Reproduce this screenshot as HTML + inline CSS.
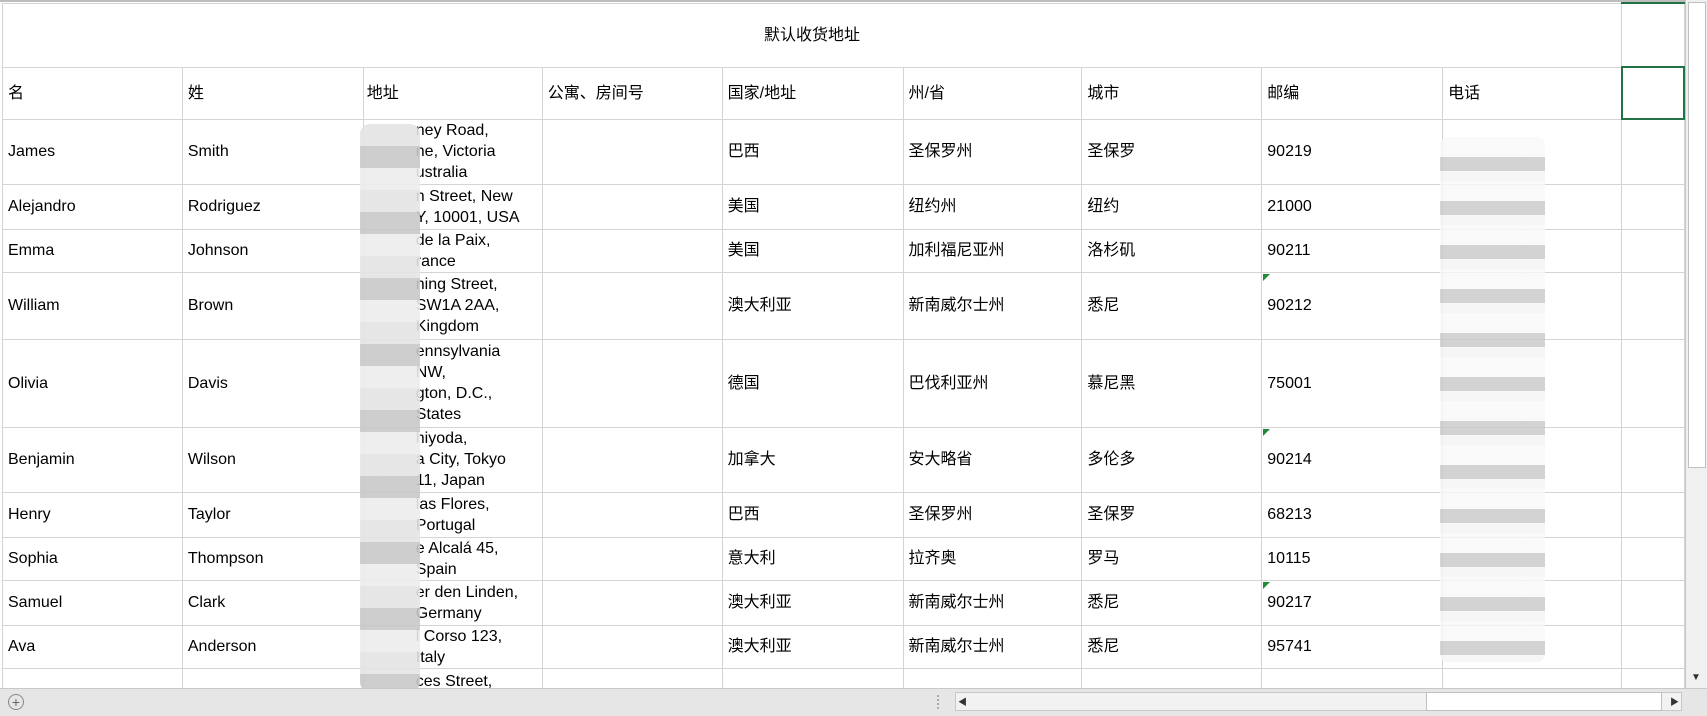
<!DOCTYPE html>
<html><head><meta charset="utf-8"><style>
body{margin:0;width:1707px;height:716px;overflow:hidden;background:#fff;position:relative;font-family:"Liberation Sans","Noto Sans CJK SC",sans-serif;font-size:16px;color:#000}
#wrap{position:absolute;left:0;top:0;width:1685px;height:688px;overflow:hidden;border-top:2px solid #bdbdbd;box-sizing:border-box}
table{position:absolute;left:2px;top:0;border-collapse:collapse;table-layout:fixed}
td{border:1px solid #d4d4d4;padding:0 0 0 5px;vertical-align:middle;white-space:nowrap;overflow:hidden;line-height:21px}
td.a{padding-left:52px;white-space:normal}
.sel{position:absolute;left:1621px;top:64px;width:64px;height:54px;border:2px solid #217346;box-sizing:border-box}
.blur{position:absolute;background:#ccc}
.tri{position:absolute;width:0;height:0;border-top:7px solid #1e8a3a;border-right:7px solid transparent}
</style></head><body>
<div id="wrap">
<table>
<colgroup><col style="width:180px"><col style="width:181px"><col style="width:179px"><col style="width:180px"><col style="width:181px"><col style="width:179px"><col style="width:180px"><col style="width:181px"><col style="width:179px"><col style="width:63px"></colgroup>
<tr style="height:64px"><td colspan="9" style="text-align:center;padding:0 0 0 0">默认收货地址</td><td style="border-top:2px solid #217346"></td></tr>
<tr style="height:52px"><td>名</td><td>姓</td><td style="padding-left:3px">地址</td><td>公寓、房间号</td><td>国家/地址</td><td>州/省</td><td>城市</td><td>邮编</td><td>电话</td><td></td></tr>
<tr style="height:65px"><td>James</td><td>Smith</td><td class="a">ney Road,<br>ne, Victoria<br>ustralia</td><td></td><td>巴西</td><td>圣保罗州</td><td>圣保罗</td><td>90219</td><td></td><td></td></tr>
<tr style="height:45px"><td>Alejandro</td><td>Rodriguez</td><td class="a">n Street, New<br>Y, 10001, USA</td><td></td><td>美国</td><td>纽约州</td><td>纽约</td><td>21000</td><td></td><td></td></tr>
<tr style="height:43px"><td>Emma</td><td>Johnson</td><td class="a">de la Paix,<br>rance</td><td></td><td>美国</td><td>加利福尼亚州</td><td>洛杉矶</td><td>90211</td><td></td><td></td></tr>
<tr style="height:67px"><td>William</td><td>Brown</td><td class="a">ning Street,<br>SW1A 2AA,<br>Kingdom</td><td></td><td>澳大利亚</td><td>新南威尔士州</td><td>悉尼</td><td>90212</td><td></td><td></td></tr>
<tr style="height:88px"><td>Olivia</td><td>Davis</td><td class="a">ennsylvania<br>NW,<br>gton, D.C.,<br>States</td><td></td><td>德国</td><td>巴伐利亚州</td><td>慕尼黑</td><td>75001</td><td></td><td></td></tr>
<tr style="height:65px"><td>Benjamin</td><td>Wilson</td><td class="a">hiyoda,<br>a City, Tokyo<br>11, Japan</td><td></td><td>加拿大</td><td>安大略省</td><td>多伦多</td><td>90214</td><td></td><td></td></tr>
<tr style="height:45px"><td>Henry</td><td>Taylor</td><td class="a">las Flores,<br>Portugal</td><td></td><td>巴西</td><td>圣保罗州</td><td>圣保罗</td><td>68213</td><td></td><td></td></tr>
<tr style="height:43px"><td>Sophia</td><td>Thompson</td><td class="a">e Alcalá 45,<br>Spain</td><td></td><td>意大利</td><td>拉齐奥</td><td>罗马</td><td>10115</td><td></td><td></td></tr>
<tr style="height:45px"><td>Samuel</td><td>Clark</td><td class="a">er den Linden,<br>Germany</td><td></td><td>澳大利亚</td><td>新南威尔士州</td><td>悉尼</td><td>90217</td><td></td><td></td></tr>
<tr style="height:43px"><td>Ava</td><td>Anderson</td><td class="a">l Corso 123,<br>Italy</td><td></td><td>澳大利亚</td><td>新南威尔士州</td><td>悉尼</td><td>95741</td><td></td><td></td></tr>
<tr style="height:60px"><td></td><td></td><td class="a" style="vertical-align:top;padding-top:2px">ces Street,</td><td></td><td></td><td></td><td></td><td></td><td></td><td></td></tr>
</table>
<div class="blur" style="left:360px;top:122px;width:60px;height:568px;background:repeating-linear-gradient(180deg,#e4e4e4 0,#e4e4e4 22px,#c8c8c8 22px,#c8c8c8 44px,#ececec 44px,#ececec 66px);border-radius:10px;opacity:.9"></div>
<div class="blur" style="left:1440px;top:135px;width:105px;height:525px;background:repeating-linear-gradient(180deg,#f8f8f8 0,#f8f8f8 20px,#c8c8c8 20px,#c8c8c8 34px,#f4f4f4 34px,#f4f4f4 44px);opacity:.8;border-radius:8px"></div>
<div class="tri" style="left:1263px;top:272px"></div>
<div class="tri" style="left:1263px;top:427px"></div>
<div class="tri" style="left:1263px;top:580px"></div>
<div class="sel"></div>
</div>
<div style="position:absolute;left:1685px;top:0;width:22px;height:688px;background:#f0f0f0;border-left:1px solid #c8c8c8;box-sizing:border-box">
<div style="position:absolute;left:2px;top:2px;width:16px;height:464px;background:#fff;border:1px solid #c0c0c0"></div>
<div style="position:absolute;left:5px;top:672px;font-size:10px;color:#333">▼</div>
</div>
<div style="position:absolute;left:0;top:688px;width:1707px;height:28px;background:#e6e6e6;border-top:1px solid #c8c8c8;box-sizing:border-box">
<div style="position:absolute;left:8px;top:5px;width:14px;height:14px;border:1px solid #888;border-radius:50%;color:#666;font-size:14px;line-height:14px;text-align:center">+</div>
<div style="position:absolute;left:937px;top:6px;width:2px;height:14px;border-left:2px dotted #aaa"></div>
<div style="position:absolute;left:955px;top:3px;width:727px;height:19px;background:#f2f2f2;border:1px solid #c8c8c8;box-sizing:border-box">
<div style="position:absolute;left:2px;top:2px;font-size:9px;color:#333">◀</div>
<div style="position:absolute;left:470px;top:-1px;width:236px;height:19px;background:#fff;border:1px solid #c0c0c0;box-sizing:border-box"></div>
<div style="position:absolute;right:2px;top:2px;font-size:9px;color:#333">▶</div>
</div>
</div>
</body></html>
